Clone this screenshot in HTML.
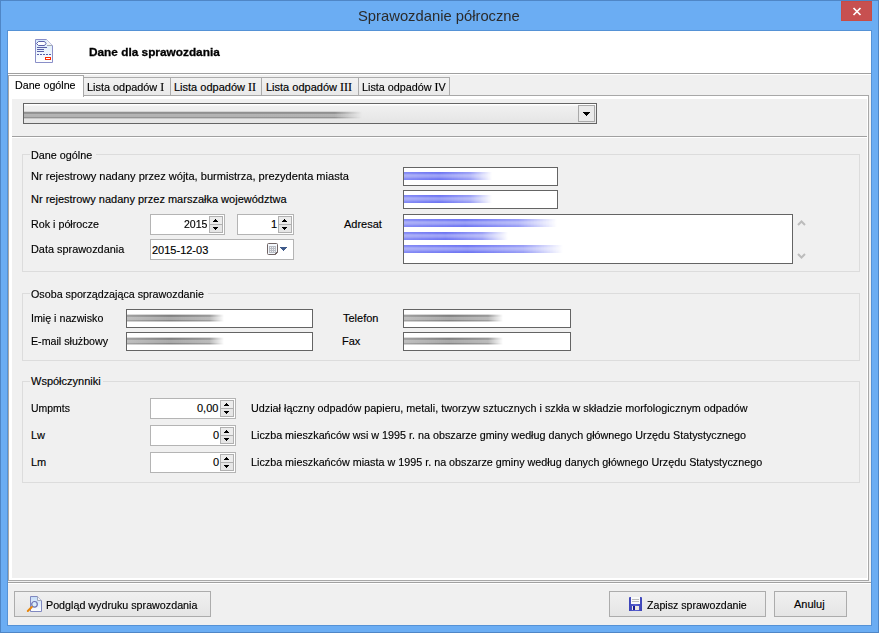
<!DOCTYPE html>
<html><head><meta charset="utf-8">
<style>
*{margin:0;padding:0;box-sizing:border-box}
html,body{width:879px;height:633px;overflow:hidden}
body{position:relative;background:#6badf3;font-family:"Liberation Sans",sans-serif;font-size:11px;color:#000}
.a{position:absolute}
.t{position:absolute;white-space:nowrap;line-height:13px;font-size:11px;transform-origin:0 0;-webkit-text-stroke:.15px #000}
.tb{position:absolute;background:#fff;border:1px solid #646464}
.grp{position:absolute;border:1px solid #dcdcdc}
.sp{position:absolute;background:#fff;border:1px solid #b4b4b4}
.btn{position:absolute;border:1px solid #acacac;background:linear-gradient(#f0f0f0,#e5e5e5)}
.tab{position:absolute;border:1px solid #acacac;border-bottom:none;background:linear-gradient(#f2f2f2,#e9e9e9)}
.blu{position:absolute;height:8px;background:linear-gradient(#5058f0 0,#6068f2 1.5px,#9096f5 3px,#848af4 5px,#6068f2 6.5px,#5058f0 8px);opacity:.85;-webkit-mask-image:linear-gradient(90deg,rgba(0,0,0,.85) 0,#000 40%,rgba(0,0,0,.7) 75%,transparent);filter:blur(.4px)}
.gry{position:absolute;height:8px;background:linear-gradient(#d0d0d0 0,#d0d0d0 1px,#7e7e7e 1px,#8a8a8a 3px,#acacac 3px,#a8a8a8 6px,#868686 6px,#868686 7px,#c4c4c4 7px);-webkit-mask-image:linear-gradient(90deg,rgba(0,0,0,.75) 0,#000 45%,rgba(0,0,0,.8) 85%,transparent);filter:blur(.3px)}
</style></head><body>
<!-- outer frame -->
<div class="a" style="left:0;top:0;width:879px;height:633px;border:1px solid #4f86c6"></div>
<div class="a" style="left:7px;top:30px;width:865px;height:596px;border:1px solid #5592d6"></div>
<!-- title -->
<div class="t" style="left:358px;top:6px;font-size:15px;line-height:19px;color:#2b2b2b;-webkit-text-stroke:0;transform:scaleX(.985)">Sprawozdanie półroczne</div>
<!-- close -->
<div class="a" style="left:841px;top:1px;width:31px;height:20px;background:#c75050;border:1px solid #c84c46"></div>
<svg class="a" style="left:852px;top:7px" width="10" height="9" viewBox="0 0 10 9"><path d="M1.5 1 L8.5 8 M8.5 1 L1.5 8" stroke="#fff" stroke-width="1.7"/></svg>

<!-- client -->
<div class="a" style="left:8px;top:31px;width:863px;height:594px;background:#f0f0f0"></div>
<!-- header -->
<div class="a" style="left:8px;top:31px;width:863px;height:42px;background:#fff"></div>
<div class="a" style="left:8px;top:73px;width:863px;height:1px;background:#a0a0a0"></div>
<div class="a" style="left:8px;top:74px;width:863px;height:1px;background:#fff"></div>
<!-- header icon -->
<svg class="a" style="left:34px;top:38px" width="20" height="26" viewBox="0 0 20 26">
 <defs><linearGradient id="pg" x1="0" y1="0" x2="0" y2="1"><stop offset="0" stop-color="#d6e8fb"/><stop offset="1" stop-color="#ffffff"/></linearGradient></defs>
 <path d="M1.5 1.5 H12.5 L18.5 7.5 V24.5 H1.5 Z" fill="url(#pg)" stroke="#8a8fc8" stroke-width="1"/>
 <path d="M12.5 1.5 L18.5 7.5 H13 Z" fill="#f2f4f6"/>
 <path d="M13 7.5 H18" stroke="#a4acb4" stroke-width="1"/>
 <path d="M2.5 5.5 L4.5 3.5 H10.5 L12 5.5 L10.5 7.5 H4.5 Z" fill="#fff" stroke="#5a60a8" stroke-width="1"/>
 <path d="M3 9.5 H13 M3 11.5 H10 M3 13.5 H10" stroke="#5a60a8" stroke-width="1"/>
 <path d="M3 16.5 H18" stroke="#5a60a8" stroke-width="1" stroke-dasharray="2 1"/>
 <rect x="11.5" y="19.5" width="5" height="2" fill="#fff" stroke="#ff2a00" stroke-width="1"/>
</svg>
<div class="t" style="left:89px;top:45px;font-weight:bold;font-size:11.6px;-webkit-text-stroke:.3px #000;transform:scaleX(1.02)">Dane dla sprawozdania</div>

<!-- tabs -->
<div class="tab" style="left:83px;top:77px;width:88px;height:18px"></div>
<div class="tab" style="left:170px;top:77px;width:92px;height:18px"></div>
<div class="tab" style="left:261px;top:77px;width:98px;height:18px"></div>
<div class="tab" style="left:358px;top:77px;width:92px;height:18px"></div>
<div class="t" style="left:87px;top:81px;transform:scaleX(.99)">Lista odpadów <span style="font-family:'Liberation Serif';font-size:12px">I</span></div>
<div class="t" style="left:174px;top:81px">Lista odpadów <span style="font-family:'Liberation Serif';font-size:12px">II</span></div>
<div class="t" style="left:266px;top:81px">Lista odpadów <span style="font-family:'Liberation Serif';font-size:12px">III</span></div>
<div class="t" style="left:362px;top:81px;transform:scaleX(.98)">Lista odpadów <span style="font-family:'Liberation Serif';font-size:12px">I</span>V</div>

<!-- tab page -->
<div class="a" style="left:8px;top:95px;width:861px;height:486px;border:1px solid #a8a8a8;background:#fff"></div>
<div class="a" style="left:12px;top:99px;width:855px;height:479px;background:#f0f0f0"></div>
<!-- active tab -->
<div class="a" style="left:8px;top:75px;width:76px;height:22px;border:1px solid #a8a8a8;border-bottom:none;background:#fff"></div>
<div class="t" style="left:15px;top:79px;transform:scaleX(.97)">Dane ogólne</div>

<!-- combobox -->
<div class="a" style="left:23px;top:103px;width:574px;height:21px;border:1px solid #646464;background:linear-gradient(#fff 0,#fff 1px,#f0f0f0 2px,#e5e5e5)"></div>
<div class="a" style="left:578px;top:105px;width:17px;height:17px;border:1px solid #a9a9a9;background:#eaeaea"></div>
<svg class="a" style="left:583px;top:112px" width="7" height="4"><path d="M0 0 H7 V1 H6 V2 H5 V3 H4 V4 H3 V3 H2 V2 H1 V1 H0 Z" fill="#000"/></svg>
<div class="gry" style="left:24px;top:111px;width:338px;opacity:.85;-webkit-mask-image:linear-gradient(90deg,#000 92%,transparent)"></div>

<!-- separator -->
<div class="a" style="left:12px;top:136px;width:855px;height:1px;background:#a0a0a0"></div>
<div class="a" style="left:12px;top:137px;width:855px;height:1px;background:#fff"></div>

<!-- group 1 -->
<div class="grp" style="left:22px;top:154px;width:838px;height:118px"></div>
<div class="a" style="left:30px;top:150px;width:66px;height:8px;background:#f0f0f0"></div>
<div class="t" style="left:31px;top:149px;transform:scaleX(.98)">Dane ogólne</div>
<div class="t" style="left:31px;top:170px;transform:scaleX(1.006)">Nr rejestrowy nadany przez wójta, burmistrza, prezydenta miasta</div>
<div class="t" style="left:31px;top:193px">Nr rejestrowy nadany przez marszałka województwa</div>
<div class="t" style="left:31px;top:218px;transform:scaleX(.975)">Rok i półrocze</div>
<div class="t" style="left:31px;top:243px;transform:scaleX(.99)">Data sprawozdania</div>
<div class="t" style="left:344px;top:218px">Adresat</div>

<div class="tb" style="left:403px;top:167px;width:155px;height:19px"></div>
<div class="blu" style="left:404px;top:172px;width:88px"></div>
<div class="tb" style="left:403px;top:190px;width:155px;height:19px"></div>
<div class="blu" style="left:404px;top:195px;width:88px"></div>

<!-- spinners -->
<div class="sp" style="left:150px;top:214px;width:75px;height:21px"></div>
<div class="t" style="left:184px;top:218px;transform:scaleX(.96)">2015</div>
<svg class="a" style="left:209px;top:216px" width="14" height="17"><rect x=".5" y=".5" width="13" height="8" fill="#ececec" stroke="#b0b0b0"/><rect x=".5" y="8.5" width="13" height="8" fill="#e6e6e6" stroke="#b0b0b0"/><path d="M6 3h1v1h1v1h1v1H4V5h1V4h1z M4 11h5v1H8v1H7v1H6v-1H5v-1H4z" fill="#000"/></svg>
<div class="sp" style="left:237px;top:214px;width:57px;height:21px"></div>
<div class="t" style="left:271px;top:218px">1</div>
<svg class="a" style="left:278px;top:216px" width="14" height="17"><rect x=".5" y=".5" width="13" height="8" fill="#ececec" stroke="#b0b0b0"/><rect x=".5" y="8.5" width="13" height="8" fill="#e6e6e6" stroke="#b0b0b0"/><path d="M6 3h1v1h1v1h1v1H4V5h1V4h1z M4 11h5v1H8v1H7v1H6v-1H5v-1H4z" fill="#000"/></svg>

<!-- date picker -->
<div class="sp" style="left:150px;top:239px;width:144px;height:21px"></div>
<div class="t" style="left:152px;top:244px">2015-12-03</div>
<svg class="a" style="left:267px;top:243px" width="22" height="13">
 <path d="M1.5 .5 H9.5 A1 1 0 0 1 10.5 1.5 V9.5 L8.5 11.5 H1.5 A1 1 0 0 1 .5 10.5 V1.5 A1 1 0 0 1 1.5 .5Z" fill="#f4f8fc" stroke="#706464"/>
 <path d="M10.5 9.5 H8.5 V11.5" fill="none" stroke="#706464"/>
 <rect x="2" y="3" width="7" height="7" fill="#b8bcc4"/>
 <path d="M3 4h1v1H3zM5 4h1v1H5zM7 4h1v1H7zM3 6h1v1H3zM5 6h1v1H5zM7 6h1v1H7zM3 8h1v1H3zM5 8h1v1H5zM7 8h1v1H7z" fill="#f0f0f0"/>
 <path d="M13 4h7v1h-1v1h-1v1h-1v1h-1v-1h-1v-1h-1v-1h-1z" fill="#3f5a8a"/>
</svg>

<!-- adresat -->
<div class="tb" style="left:403px;top:214px;width:390px;height:50px"></div>
<div class="blu" style="left:404px;top:219px;width:153px"></div>
<div class="blu" style="left:404px;top:232px;width:104px"></div>
<div class="blu" style="left:404px;top:245px;width:159px"></div>
<svg class="a" style="left:797px;top:219px" width="10" height="42"><path d="M1 6 L4.5 2.5 L8 6 M1 35 L4.5 38.5 L8 35" fill="none" stroke="#bcbcbc" stroke-width="2"/></svg>

<!-- group 2 -->
<div class="grp" style="left:22px;top:293px;width:838px;height:68px"></div>
<div class="a" style="left:30px;top:289px;width:178px;height:8px;background:#f0f0f0"></div>
<div class="t" style="left:31px;top:288px;transform:scaleX(.975)">Osoba sporządzająca sprawozdanie</div>
<div class="t" style="left:31px;top:312px;transform:scaleX(.97)">Imię i nazwisko</div>
<div class="t" style="left:31px;top:335px;transform:scaleX(.97)">E-mail służbowy</div>
<div class="t" style="left:343px;top:312px">Telefon</div>
<div class="t" style="left:342px;top:335px">Fax</div>
<div class="tb" style="left:126px;top:309px;width:187px;height:19px"></div>
<div class="gry" style="left:127px;top:314px;width:97px"></div>
<div class="tb" style="left:126px;top:332px;width:187px;height:19px"></div>
<div class="gry" style="left:127px;top:337px;width:97px"></div>
<div class="tb" style="left:403px;top:309px;width:168px;height:19px"></div>
<div class="gry" style="left:404px;top:314px;width:99px"></div>
<div class="tb" style="left:403px;top:332px;width:168px;height:19px"></div>
<div class="gry" style="left:404px;top:337px;width:99px"></div>

<!-- group 3 -->
<div class="grp" style="left:22px;top:381px;width:838px;height:102px"></div>
<div class="a" style="left:30px;top:377px;width:73px;height:8px;background:#f0f0f0"></div>
<div class="t" style="left:31px;top:375px">Współczynniki</div>
<div class="t" style="left:31px;top:402px;transform:scaleX(.95)">Umpmts</div>
<div class="t" style="left:31px;top:429px">Lw</div>
<div class="t" style="left:31px;top:456px">Lm</div>
<div class="sp" style="left:150px;top:398px;width:86px;height:21px"></div>
<div class="t" style="left:197px;top:402px">0,00</div>
<svg class="a" style="left:220px;top:400px" width="14" height="17"><rect x=".5" y=".5" width="13" height="8" fill="#ececec" stroke="#b0b0b0"/><rect x=".5" y="8.5" width="13" height="8" fill="#e6e6e6" stroke="#b0b0b0"/><path d="M6 3h1v1h1v1h1v1H4V5h1V4h1z M4 11h5v1H8v1H7v1H6v-1H5v-1H4z" fill="#000"/></svg>
<div class="sp" style="left:150px;top:425px;width:86px;height:21px"></div>
<div class="t" style="left:213px;top:429px">0</div>
<svg class="a" style="left:220px;top:427px" width="14" height="17"><rect x=".5" y=".5" width="13" height="8" fill="#ececec" stroke="#b0b0b0"/><rect x=".5" y="8.5" width="13" height="8" fill="#e6e6e6" stroke="#b0b0b0"/><path d="M6 3h1v1h1v1h1v1H4V5h1V4h1z M4 11h5v1H8v1H7v1H6v-1H5v-1H4z" fill="#000"/></svg>
<div class="sp" style="left:150px;top:452px;width:86px;height:21px"></div>
<div class="t" style="left:213px;top:456px">0</div>
<svg class="a" style="left:220px;top:454px" width="14" height="17"><rect x=".5" y=".5" width="13" height="8" fill="#ececec" stroke="#b0b0b0"/><rect x=".5" y="8.5" width="13" height="8" fill="#e6e6e6" stroke="#b0b0b0"/><path d="M6 3h1v1h1v1h1v1H4V5h1V4h1z M4 11h5v1H8v1H7v1H6v-1H5v-1H4z" fill="#000"/></svg>
<div class="t" style="left:251px;top:402px;transform:scaleX(.981)">Udział łączny odpadów papieru, metali, tworzyw sztucznych i szkła w składzie morfologicznym odpadów</div>
<div class="t" style="left:251px;top:429px;transform:scaleX(.979)">Liczba mieszkańców wsi w 1995 r. na obszarze gminy według danych głównego Urzędu Statystycznego</div>
<div class="t" style="left:251px;top:456px;transform:scaleX(.979)">Liczba mieszkańców miasta w 1995 r. na obszarze gminy według danych głównego Urzędu Statystycznego</div>

<!-- bottom panel -->
<div class="a" style="left:8px;top:582px;width:863px;height:1px;background:#a0a0a0"></div>
<div class="a" style="left:8px;top:583px;width:863px;height:1px;background:#fff"></div>
<div class="btn" style="left:14px;top:591px;width:197px;height:26px"></div>
<svg class="a" style="left:26px;top:595px" width="17" height="18">
 <defs><linearGradient id="pg2" x1="0" y1="0" x2="0" y2="1"><stop offset="0" stop-color="#c4dcf8"/><stop offset="1" stop-color="#ffffff"/></linearGradient></defs>
 <path d="M4.5 1.5 H11.5 L15.5 5.5 V16.5 H4.5 Z" fill="url(#pg2)" stroke="#8088c0"/>
 <path d="M11.5 1.5 V5.5 H15.5" fill="#f4f4f4" stroke="#a0a8b8"/>
 <circle cx="8.5" cy="9.3" r="2.8" fill="#d8ecfa" stroke="#6a70b0" stroke-width="1.2"/>
 <path d="M5.8 12 L1.8 16" stroke="#e8860a" stroke-width="2" stroke-linecap="round"/>
</svg>
<div class="t" style="left:46px;top:599px;transform:scaleX(.975)">Podgląd wydruku sprawozdania</div>
<div class="btn" style="left:609px;top:591px;width:157px;height:26px"></div>
<svg class="a" style="left:629px;top:596px" width="13" height="16">
 <defs><linearGradient id="fl" x1="0" y1="0" x2="1" y2="0"><stop offset="0" stop-color="#3c44b8"/><stop offset=".5" stop-color="#5a62d0"/><stop offset="1" stop-color="#3c44b8"/></linearGradient></defs>
 <path d="M0 2 Q0 1 1 1 H12 Q13 1 13 2 V15 H0 Z" fill="url(#fl)"/>
 <rect x="2" y="1" width="9" height="7" fill="#fafafa"/>
 <path d="M3 3.5 H10 M3 5.5 H10" stroke="#bcbcbc"/>
 <rect x="3" y="10" width="7" height="4" fill="#ece8e0"/>
 <rect x="4" y="10" width="2" height="4" fill="#1a1a90"/>
</svg>
<div class="t" style="left:647px;top:599px;transform:scaleX(.965)">Zapisz sprawozdanie</div>
<div class="btn" style="left:774px;top:591px;width:73px;height:26px"></div>
<div class="t" style="left:794px;top:598px">Anuluj</div>
</body></html>
